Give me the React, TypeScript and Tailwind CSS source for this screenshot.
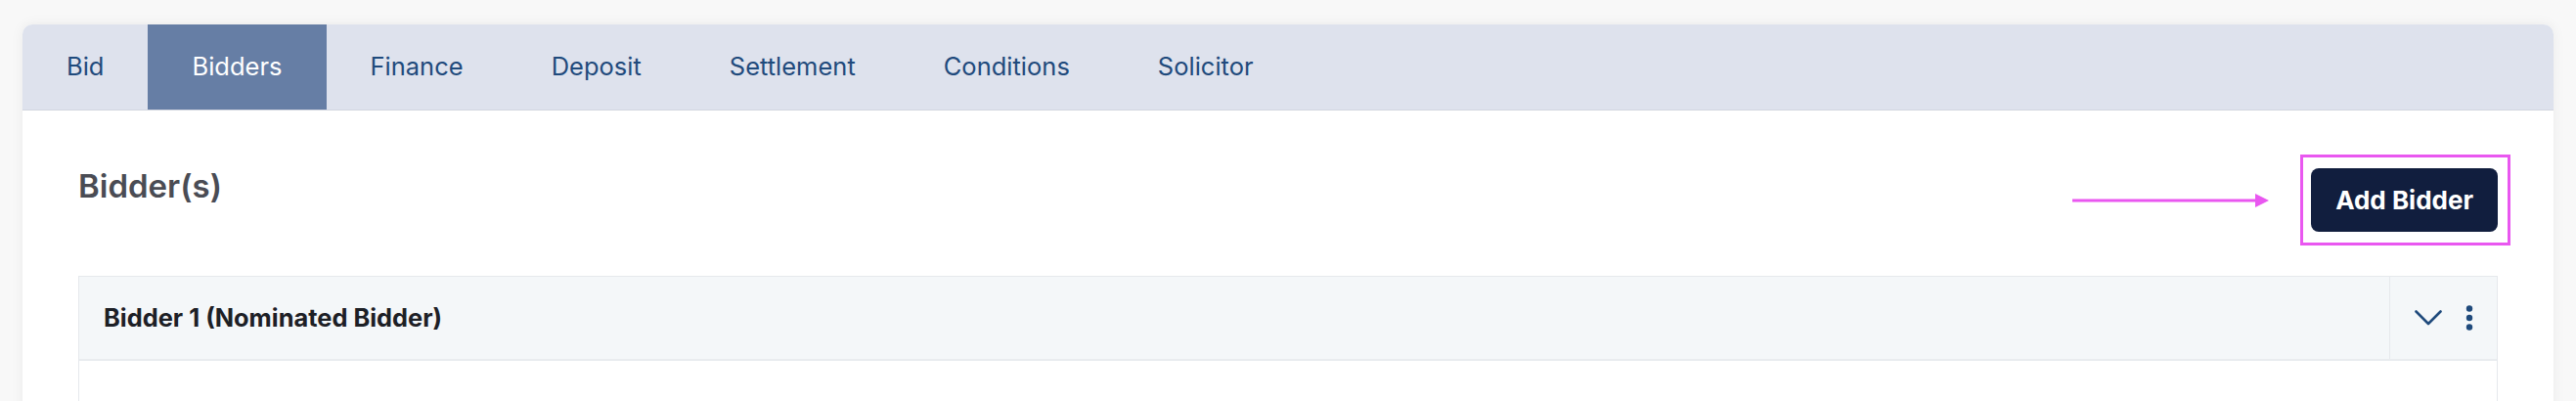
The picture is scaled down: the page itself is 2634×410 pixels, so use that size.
import { useState } from "react";

const TABS = [
  "Bid",
  "Bidders",
  "Finance",
  "Deposit",
  "Settlement",
  "Conditions",
  "Solicitor",
] as const;

function ChevronDown() {
  return (
    <svg width="28" height="16" viewBox="0 0 28 16" fill="none">
      <path
        d="M1.5 1.5 L14 14 L26.5 1.5"
        stroke="#1f4a7c"
        strokeWidth="2.6"
        strokeLinecap="round"
        strokeLinejoin="round"
      />
    </svg>
  );
}

function MoreVertical() {
  return (
    <svg width="8" height="26" viewBox="0 0 8 26" fill="#1f4a7c">
      <circle cx="4" cy="3.5" r="3.2" />
      <circle cx="4" cy="13" r="3.2" />
      <circle cx="4" cy="22.5" r="3.2" />
    </svg>
  );
}

export default function App() {
  const [active, setActive] = useState<(typeof TABS)[number]>("Bidders");

  return (
    <div
      className="h-[410px] overflow-hidden bg-[#f8f8f8] px-[23px] pt-[25px]"
      style={{ fontFamily: "Inter, 'Noto Sans', sans-serif" }}
    >
      <div className="h-[400px] overflow-hidden rounded-t-[10px] bg-white shadow-[0_0_14px_rgba(0,0,0,0.06)]">
        {/* tab strip */}
        <div className="flex h-[88px] border-b border-[#d2d6df] bg-[#dee2ed]">
          {TABS.map((tab) => (
            <button
              key={tab}
              onClick={() => setActive(tab)}
              className={
                tab === active
                  ? "flex items-center bg-[#667ea5] px-[45px] text-[25.5px] text-white"
                  : "flex items-center px-[45px] text-[25.5px] text-[#1f4a7c]"
              }
            >
              {tab}
            </button>
          ))}
        </div>

        <div className="px-[57px]">
          <div className="flex items-start justify-between pt-[57px]">
            <h2 className="text-[33px] leading-[40px] font-semibold text-[#4a4c54]">
              Bidder(s)
            </h2>

            <div className="flex items-center">
              {/* annotation arrow */}
              <svg width="202" height="16" viewBox="0 0 202 16" className="mt-[2px] mr-[42px]">
                <line x1="0" y1="8" x2="189" y2="8" stroke="#e957f0" strokeWidth="3" />
                <path d="M187 1 L201 8 L187 15 Z" fill="#e957f0" />
              </svg>

              <div className="relative mt-[2px]">
                <button className="h-[65px] rounded-[8px] bg-[#111e3e] px-[25px] text-[26px] font-bold text-white">
                  Add Bidder
                </button>
                <span className="pointer-events-none absolute -top-[14px] -right-[13px] -bottom-[14px] -left-[11px] border-[3px] border-[#e957f0]" />
              </div>
            </div>
          </div>

          {/* accordion */}
          <div className="mt-[45px] border border-[#e6e9ec]">
            <div className="flex h-[86px] border-b-2 border-[#e9ecef] bg-[#f4f7f9]">
              <div className="flex flex-1 items-center pl-[25px] text-[25.4px] font-bold text-[#1d2026]">
                Bidder 1 (Nominated Bidder)
              </div>
              <div className="flex w-[110px] items-center border-l border-[#e6e9ec] pl-[25px]">
                <ChevronDown />
                <span className="ml-[24px]">
                  <MoreVertical />
                </span>
              </div>
            </div>
            <div className="h-[80px] bg-white" />
          </div>
        </div>
      </div>
    </div>
  );
}
